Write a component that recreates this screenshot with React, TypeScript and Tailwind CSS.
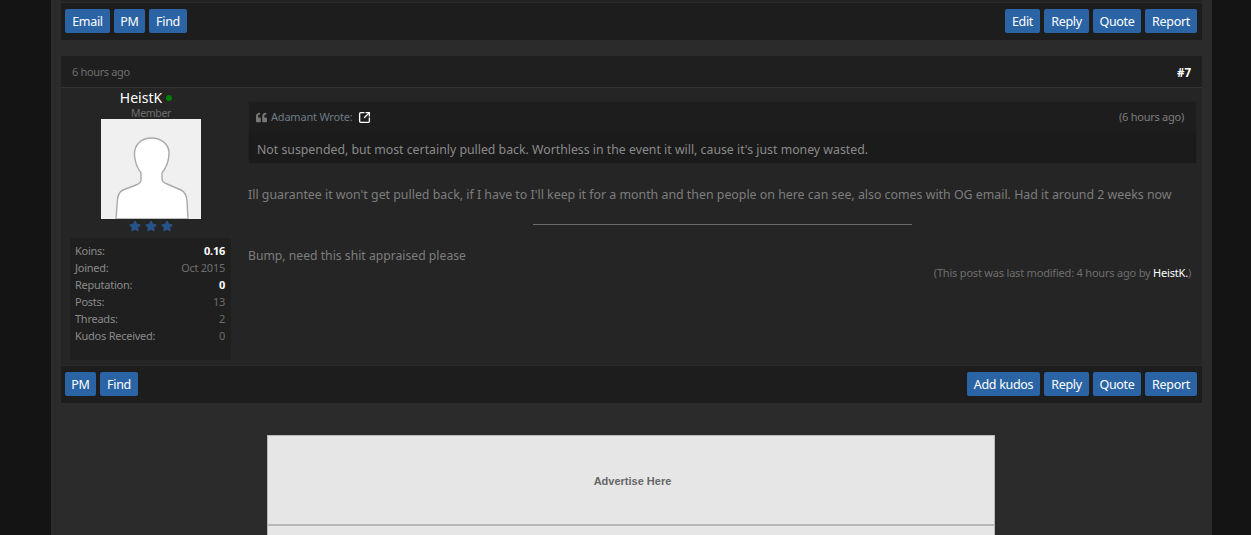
import React from 'react';
import { SquareArrowOutUpRight } from 'lucide-react';
import { FaQuoteLeft, FaStar } from 'react-icons/fa';

const buttonWidths: Record<string, string> = {
  Email: 'w-[45px]',
  PM: 'w-[31px]',
  Find: 'w-[38px]',
  Edit: 'w-[35px]',
  Reply: 'w-[45px]',
  Quote: 'w-[48px]',
  Report: 'w-[52px]',
  'Add kudos': 'w-[73px]',
};

const Btn: React.FC<{ label: string }> = ({ label }) => (
  <a className={`${buttonWidths[label]} flex h-6 items-center justify-center rounded-[2px] bg-[#2b64a5] pt-[2px] text-[12.5px] tracking-[-0.3px] text-white`}>
    {label}
  </a>
);

const ButtonBar: React.FC<{ left: string[]; right: string[] }> = ({ left, right }) => (
  <div className="flex h-[38px] items-center justify-between border-t border-[#2a2a2a] bg-[#1d1d1d] pb-px pl-1 pr-[5px]">
    <div className="flex gap-1">
      {left.map((b) => (
        <Btn key={b} label={b} />
      ))}
    </div>
    <div className="flex gap-1">
      {right.map((b) => (
        <Btn key={b} label={b} />
      ))}
    </div>
  </div>
);

const stats: [string, string, boolean][] = [
  ['Koins:', '0.16', true],
  ['Joined:', 'Oct 2015', false],
  ['Reputation:', '0', true],
  ['Posts:', '13', false],
  ['Threads:', '2', false],
  ['Kudos Received:', '0', false],
];

export default function App() {
  return (
    <div className="h-[535px] overflow-hidden bg-[#141414] text-[12px] text-[#7d7d7d] [font-family:'Noto_Sans',sans-serif]">
      <div className="ml-[51px] mr-[39px] h-full bg-[#2b2b2b] px-2.5">
        {/* previous post footer */}
        <div className="h-0.5 bg-[#222]" />
        <ButtonBar left={['Email', 'PM', 'Find']} right={['Edit', 'Reply', 'Quote', 'Report']} />

        {/* post 7 */}
        <div className="mt-4 bg-[#252525]">
          <div className="flex h-[31px] items-center justify-between bg-[#1f1f1f] px-[11px] pt-[2px]">
            <span className="text-[11px] tracking-[-0.35px] text-[#6e6e6e]">6 hours ago</span>
            <span className="text-[11.5px] font-bold text-white">#7</span>
          </div>
          <div className="h-px bg-[#333]" />
          <div className="flex h-[277px]">
            <div className="flex w-[187px] shrink-0 flex-col items-center pl-[9px] pr-[16px]">
              <div className="ml-[-10px] flex h-[19px] items-center gap-[4px] text-[14px] leading-[19px] text-white">
                HeistK
                <span className="h-[6px] w-[6px] rounded-full bg-[#008000]" />
              </div>
              <div className="h-[12px] text-[10.5px] leading-[12px] tracking-[-0.3px] text-[#6e6e6e]">Member</div>
              <div className="ml-[-1px] h-[100px] w-[100px]">
                <svg viewBox="0 0 100 100" className="block h-full w-full">
                  <rect width="100" height="100" fill="#f0f0f0" />
                  <path
                    d="M50.5 19C40 19 33 26 33.5 36C34 44 37 50 40 54L40 61C40 64 38 65 35 66L22 71C18 73 17 76 16.5 80L15 100L87 100L86 82C85.5 76 84 73 80 71L66 65C63 64 61 63 61 60L61 54C65 49 68 42 68 34C68 25 60 19 50.5 19Z"
                    fill="#ffffff"
                    stroke="#aaaaaa"
                    strokeWidth="1.4"
                  />
                </svg>
              </div>
              <div className="flex h-[14px] items-center gap-[4px] text-[#27528a]">
                <FaStar size={12} />
                <FaStar size={12} />
                <FaStar size={12} />
              </div>
              <div className="mt-[5px] h-[122px] w-[161px] self-start bg-[#1f1f1f] pl-[5px] pr-[6px] pt-[5px]">
                {stats.map(([k, v, strong]) => (
                  <div key={k} className="flex h-[17px] items-center justify-between text-[11px] tracking-[-0.25px]">
                    <span className="text-[#8a8a8a]">{k}</span>
                    <span className={strong ? 'font-bold text-white' : 'text-[#6e6e6e]'}>{v}</span>
                  </div>
                ))}
              </div>
            </div>
            <div className="min-w-0 flex-1 pr-[5px] pt-[13px]">
              <div className="border border-[#222] bg-[#1b1b1b]">
                <div className="flex h-[30px] items-center justify-between bg-[#1d1d1d] pl-[7px] pr-[12px] text-[11px] tracking-[-0.2px]">
                  <span className="flex items-center gap-[4px] text-[#6e7a85]">
                    <FaQuoteLeft size={11} className="text-[#777]" />
                    Adamant Wrote:
                    <SquareArrowOutUpRight size={13} strokeWidth={2.5} className="ml-[2px] text-white" />
                  </span>
                  <span className="tracking-[-0.25px]">(6 hours ago)</span>
                </div>
                <div className="h-[31px] pl-2 pt-[8px] text-[12.3px] leading-[20px] text-[#8a8a8a]">
                  Not suspended, but most certainly pulled back. Worthless in the event it will, cause it's just money wasted.
                </div>
              </div>
              <div className="mt-[22px] text-[12.36px] leading-[17px] text-[#7d7d7d]">
                Ill guarantee it won't get pulled back, if I have to I'll keep it for a month and then people on here can see, also comes with OG email. Had it around 2 weeks now
              </div>
              <div className="ml-[285px] mt-[21px] h-px w-[379px] bg-[#6a6a6a]" />
              <div className="mt-[22px] text-[12.2px] leading-[17px] text-[#7d7d7d]">Bump, need this shit appraised please</div>
              <div className="mt-[2px] pr-[6px] text-right text-[11px] leading-[14px] tracking-[-0.2px] text-[#6e6e6e]">
                (This post was last modified: 4 hours ago by <span className="text-white">HeistK.</span>)
              </div>
            </div>
          </div>
          <ButtonBar left={['PM', 'Find']} right={['Add kudos', 'Reply', 'Quote', 'Report']} />
        </div>

        {/* ad */}
        <div className="ml-[206px] mt-8 w-[728px] border border-b-0 border-[#b8b8b8] bg-[#e6e6e6]">
          <div className="flex h-[90px] items-center justify-center border-b-2 border-[#b8b8b8] pl-[3px] pt-[2px] text-[11px] font-bold text-[#666] [font-family:'Liberation_Sans',sans-serif]">
            Advertise Here
          </div>
          <div className="h-3" />
        </div>
      </div>
    </div>
  );
}
